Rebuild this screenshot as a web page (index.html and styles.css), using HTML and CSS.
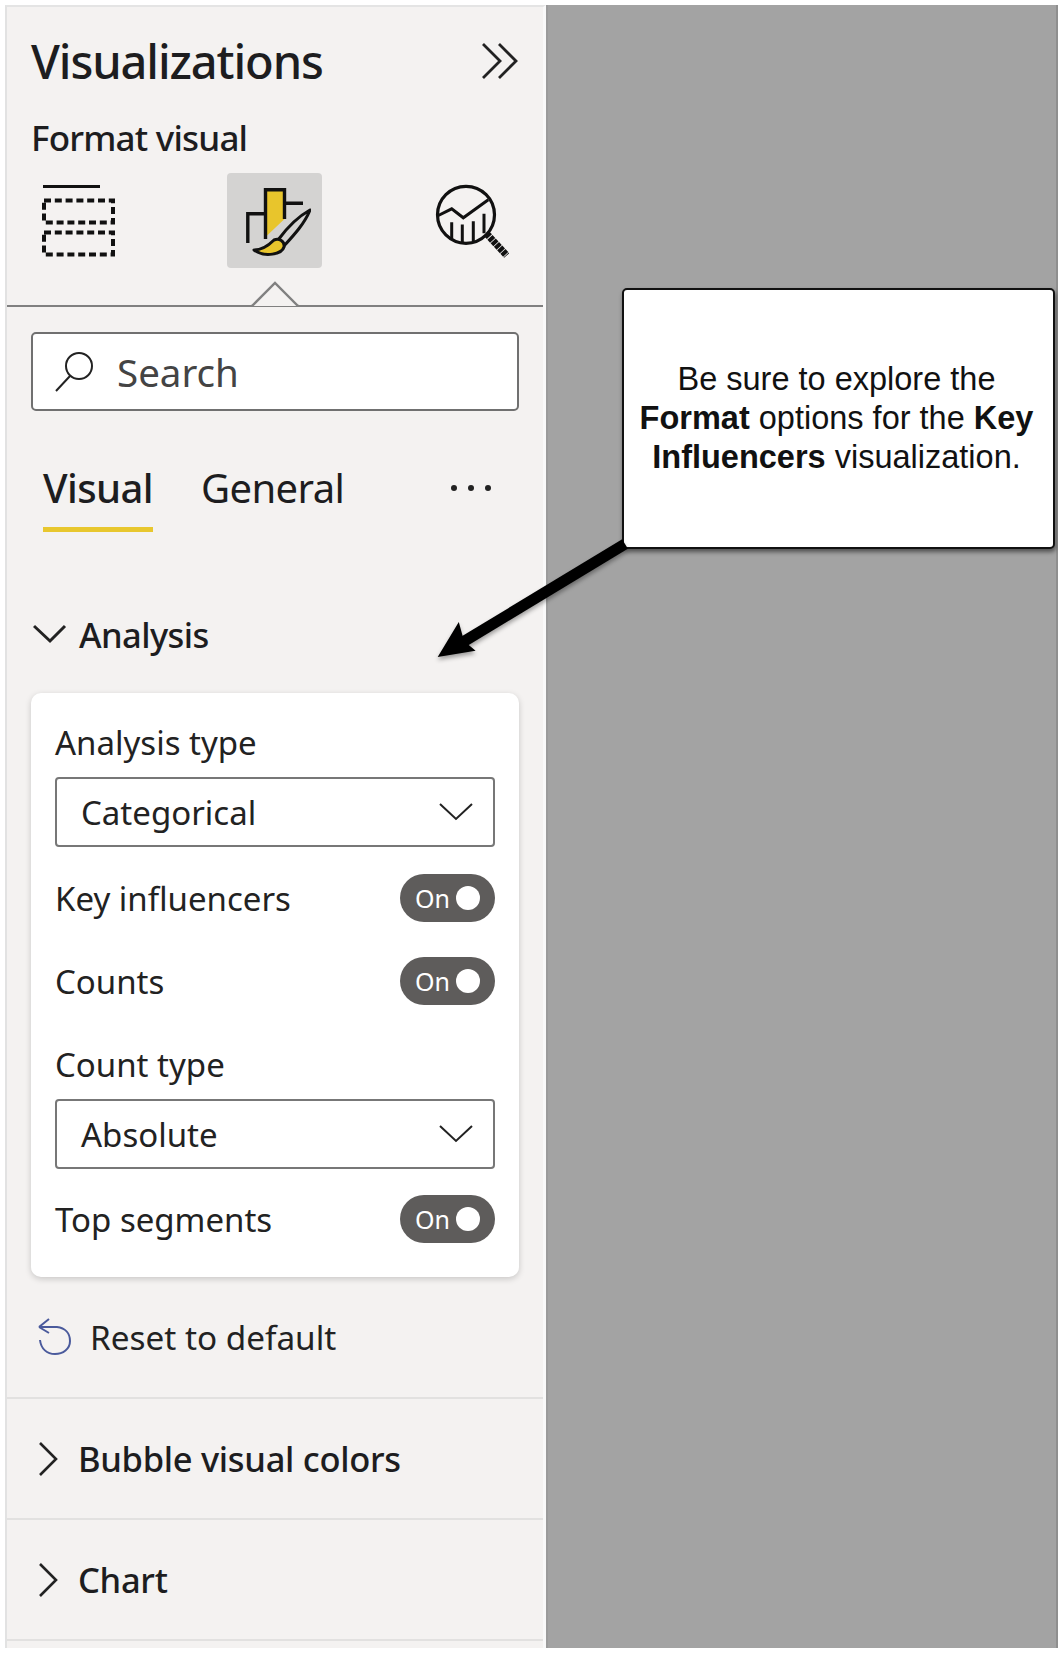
FILE: index.html
```html
<!DOCTYPE html>
<html lang="en">
<head>
  <meta charset="UTF-8">
  <title>Format visual</title>
  <link rel="stylesheet" href="styles.css">
</head>
<body>
  <div class="shot">
    <!-- Left panel -->
    <div class="panel">
      <div class="panel-head">
        <h1>Visualizations</h1>
        <svg class="collapse-icon" width="38" height="38" viewBox="0 0 38 38">
          <path d="M3 2 L20 19 L3 36 M19 2 L36 19 L19 36" fill="none" stroke="#222" stroke-width="2.8"/>
        </svg>
      </div>
      <div class="subtitle">Format visual</div>

      <div class="tool-row">
        <svg class="tool-fields" width="74" height="76" viewBox="0 0 74 76">
          <path d="M2 3.5 H59" fill="none" stroke="#111" stroke-width="3"/>
          <rect x="3" y="17.5" width="69" height="22" fill="none" stroke="#111" stroke-width="4" stroke-dasharray="7 3.8"/>
          <rect x="3" y="49.5" width="69" height="22" fill="none" stroke="#111" stroke-width="4" stroke-dasharray="7 3.8"/>
        </svg>
        <div class="tool-active">
          <svg width="72" height="72" viewBox="0 0 72 72">
            <path d="M26.5 4.8 H45.5 V34 L26.5 52 Z" fill="#e8c52c"/>
            <path d="M26.5 54 V4.8 H45.5 V34 M45.5 18.2 H64 M26.5 28.8 H8.8 V58" fill="none" stroke="#111" stroke-width="3.4"/>
            <path d="M71 25 C62 30 50 40 39 55 L45 61 C55 50 66 38 71 25 Z" fill="#d4d3d2" stroke="#111" stroke-width="3" stroke-linejoin="round"/>
            <path d="M15 65 C24 65 30 60 35 55 C40 53 46 56 45 62 C43 69 26 73 15 65 Z" fill="#e8c52c" stroke="#111" stroke-width="3" stroke-linejoin="round"/>
          </svg>
        </div>
        <svg class="tool-analytics" width="74" height="76" viewBox="0 0 74 76">
          <circle cx="31" cy="31.8" r="28.5" fill="none" stroke="#111" stroke-width="3.2"/>
          <path d="M3.3 32.5 L16.7 25.8 L28.3 34.8 L53.3 16.8" fill="none" stroke="#111" stroke-width="3"/>
          <path d="M16.7 39.2 V55.8 M27.3 41.5 V60.2 M38.3 38.2 V58.2 M49 30.8 V50.2" fill="none" stroke="#111" stroke-width="3"/>
          <path d="M51.7 50.8 L71.7 72.5" fill="none" stroke="#111" stroke-width="7" stroke-dasharray="4 0.8"/>
        </svg>
      </div>

      <div class="tool-rule">
        <svg class="notch" width="48" height="26" viewBox="0 0 48 26">
          <path d="M0 25 H1 L24 2 L47 25 H48" fill="#f4f2f1" stroke="#808080" stroke-width="2.4"/>
        </svg>
      </div>

      <div class="search">
        <svg width="44" height="44" viewBox="0 0 44 44">
          <circle cx="26" cy="16" r="13" fill="none" stroke="#222" stroke-width="2"/>
          <path d="M17 26 L3 41" fill="none" stroke="#222" stroke-width="2"/>
        </svg>
        <span>Search</span>
      </div>

      <div class="tabs">
        <div class="tab tab-active">Visual</div>
        <div class="tab">General</div>
        <div class="tab-more"><i></i><i></i><i></i></div>
      </div>

      <div class="section-title section-open">
        <svg width="34" height="20" viewBox="0 0 34 20">
          <path d="M1 2 L17 17 L32 2" fill="none" stroke="#222" stroke-width="3"/>
        </svg>
        <span>Analysis</span>
      </div>

      <div class="card">
        <div class="field-label">Analysis type</div>
        <div class="select">
          <span>Categorical</span>
          <svg width="34" height="20" viewBox="0 0 34 20"><path d="M1 2 L17 17 L33 2" fill="none" stroke="#222" stroke-width="2"/></svg>
        </div>
        <div class="toggle-row">
          <span>Key influencers</span>
          <div class="toggle"><span>On</span><i></i></div>
        </div>
        <div class="toggle-row">
          <span>Counts</span>
          <div class="toggle"><span>On</span><i></i></div>
        </div>
        <div class="field-label field-label-gap">Count type</div>
        <div class="select">
          <span>Absolute</span>
          <svg width="34" height="20" viewBox="0 0 34 20"><path d="M1 2 L17 17 L33 2" fill="none" stroke="#222" stroke-width="2"/></svg>
        </div>
        <div class="toggle-row toggle-row-last">
          <span>Top segments</span>
          <div class="toggle"><span>On</span><i></i></div>
        </div>
      </div>

      <div class="reset">
        <svg width="36" height="38" viewBox="0 0 36 38">
          <path d="M2 9 L12 1 M2 9 L12 15 M2 9 H20 C28 10 33 15 33 23 C33 31 26 36 18 36 C10 36 4 31 3 22" fill="none" stroke="#4a5a9c" stroke-width="2"/>
        </svg>
        <span>Reset to default</span>
      </div>

      <div class="section-title section-closed">
        <svg width="22" height="36" viewBox="0 0 22 36"><path d="M3 2 L19 18 L3 34" fill="none" stroke="#222" stroke-width="2.6"/></svg>
        <span>Bubble visual colors</span>
      </div>
      <div class="section-title section-closed">
        <svg width="22" height="36" viewBox="0 0 22 36"><path d="M3 2 L19 18 L3 34" fill="none" stroke="#222" stroke-width="2.6"/></svg>
        <span>Chart</span>
      </div>
    </div>

    <!-- Grey area with the note -->
    <div class="canvas">
      <div class="note">
        <p>Be sure to explore the <b>Format</b> options for the <b>Key Influencers</b> visualization.</p>
      </div>
    </div>

    <!-- Arrow from note to Analysis section -->
    <svg class="arrow" width="220" height="130" viewBox="0 0 220 130">
      <defs>
        <filter id="arrow-shadow" x="-10%" y="-10%" width="120%" height="130%">
          <feDropShadow dx="0" dy="3" stdDeviation="2" flood-color="#000" flood-opacity="0.35"/>
        </filter>
      </defs>
      <g filter="url(#arrow-shadow)">
        <path d="M192 7 L30 105" fill="none" stroke="#000" stroke-width="11"/>
        <path d="M4.7 120 L25.8 85 L31 104 L42.6 113.7 Z" fill="#000"/>
      </g>
    </svg>
  </div>
</body>
</html>
```

FILE: styles.css
```css
/* General */
html, body {
  margin: 0;
  padding: 0;
  background: #fff;
}

.shot {
  position: relative;
  width: 1053px;
  height: 1643px;
  margin: 5px;
  display: flex;
  overflow: hidden;
  font-family: 'Noto Sans', 'Open Sans', sans-serif;
  color: #1d1d1f;
}

/* Panel */
.panel {
  width: 541px;
  flex: none;
  box-sizing: border-box;
  background: #f4f2f1;
  border-left: 2px solid #e2e2e2;
  border-right: 3px solid #f9f9f9;
  border-top: 2px solid #e4e4e4;
}

.panel-head {
  display: flex;
  align-items: center;
  justify-content: space-between;
  padding: 25px 25px 0 24px;
  height: 57px;
}

h1 {
  margin: 0;
  font-size: 47px;
  font-weight: 500;
  letter-spacing: -1.1px;
  line-height: 56px;
}

.subtitle {
  padding: 27px 0 0 24px;
  font-size: 35px;
  font-weight: 500;
  letter-spacing: -0.8px;
  line-height: 44px;
}

/* Tool icons */
.tool-row {
  display: flex;
  align-items: center;
  height: 95px;
  margin-top: 13px;
  padding-left: 34px;
}

.tool-active {
  width: 95px;
  height: 95px;
  margin-left: 112px;
  background: #d4d3d2;
  border-radius: 4px;
  display: flex;
  align-items: center;
  justify-content: center;
}

.tool-analytics {
  margin-left: 113px;
}

.tool-rule {
  position: relative;
  height: 2px;
  margin-top: 37px;
  background: #808080;
}

.notch {
  position: absolute;
  left: 244px;
  top: -24px;
}

/* Search */
.search {
  display: flex;
  align-items: center;
  gap: 20px;
  height: 79px;
  box-sizing: border-box;
  margin: 25px 24px 0 24px;
  padding-left: 20px;
  background: #fff;
  border: 2px solid #707070;
  border-radius: 5px;
  font-size: 38.5px;
  color: #444;
}

/* Tabs */
.tabs {
  display: flex;
  align-items: flex-start;
  margin: 49px 24px 0 36px;
  height: 73px;
  font-size: 40px;
}

.tab {
  line-height: 56px;
  height: 67px;
  letter-spacing: -0.6px;
  margin-right: 48px;
}

.tab-active {
  font-weight: 500;
  border-bottom: 5px solid #e8c72e;
}

.tab-more {
  margin-left: auto;
  margin-right: 28px;
  margin-top: 25px;
  display: flex;
  gap: 11px;
}

.tab-more i {
  width: 6px;
  height: 6px;
  border-radius: 50%;
  background: #222;
}

/* Section headers */
.section-title {
  display: flex;
  align-items: center;
  font-size: 34.5px;
  font-weight: 500;
  letter-spacing: -0.3px;
}

.section-open {
  gap: 12px;
  height: 50px;
  margin-top: 76px;
  padding-left: 26px;
  letter-spacing: -0.6px;
}

.section-closed {
  gap: 19px;
  height: 121px;
  box-sizing: border-box;
  padding-left: 30px;
  border-bottom: 2px solid #e2e1e0;
}

/* Card */
.card {
  margin: 34px 24px 0 24px;
  padding: 28px 24px 0;
  height: 584px;
  box-sizing: border-box;
  background: #fff;
  border-radius: 10px;
  box-shadow: 0 2px 6px rgba(0, 0, 0, 0.18);
  font-size: 33px;
  color: #222;
}

.field-label {
  height: 44px;
  line-height: 44px;
}

.field-label-gap {
  margin-top: 38px;
}

.select {
  display: flex;
  align-items: center;
  justify-content: space-between;
  height: 70px;
  box-sizing: border-box;
  margin-top: 12px;
  padding: 0 20px 0 24px;
  border: 2px solid #777;
  border-radius: 4px;
}

.toggle-row {
  display: flex;
  align-items: center;
  justify-content: space-between;
  height: 48px;
  margin-top: 27px;
}

.toggle-row + .toggle-row {
  margin-top: 35px;
}

.toggle-row-last {
  margin-top: 26px;
}

.toggle {
  position: relative;
  width: 95px;
  height: 48px;
  background: #5e5c5b;
  border-radius: 24px;
  color: #fff;
  font-size: 25px;
  line-height: 48px;
  padding-left: 15px;
  box-sizing: border-box;
}

.toggle i {
  position: absolute;
  right: 15px;
  top: 12px;
  width: 24px;
  height: 24px;
  background: #fff;
  border-radius: 50%;
}

/* Reset */
.reset {
  display: flex;
  align-items: center;
  gap: 17px;
  height: 122px;
  box-sizing: border-box;
  padding-left: 30px;
  border-bottom: 2px solid #e2e1e0;
  font-size: 33.3px;
  color: #222;
}

/* Grey canvas and note */
.canvas {
  flex: 1;
  box-sizing: border-box;
  background: #a3a3a3;
  border-left: 2px solid #9b9b9b;
  border-right: 2px solid #8f8f8f;
  padding: 283px 0 0 74px;
}

.note {
  width: 433px;
  height: 261px;
  box-sizing: border-box;
  background: #fff;
  border: 2px solid #111;
  border-radius: 5px;
  box-shadow: 1px 3px 4px rgba(0, 0, 0, 0.5);
  display: flex;
  align-items: center;
  justify-content: center;
  text-align: center;
  font-family: 'Liberation Sans', Arial, sans-serif;
  font-size: 32.5px;
  line-height: 39px;
  color: #111;
}

.note p {
  margin: 0;
  padding: 0 14px 0 10px;
}

.arrow {
  position: absolute;
  left: 428px;
  top: 532px;
}
```
